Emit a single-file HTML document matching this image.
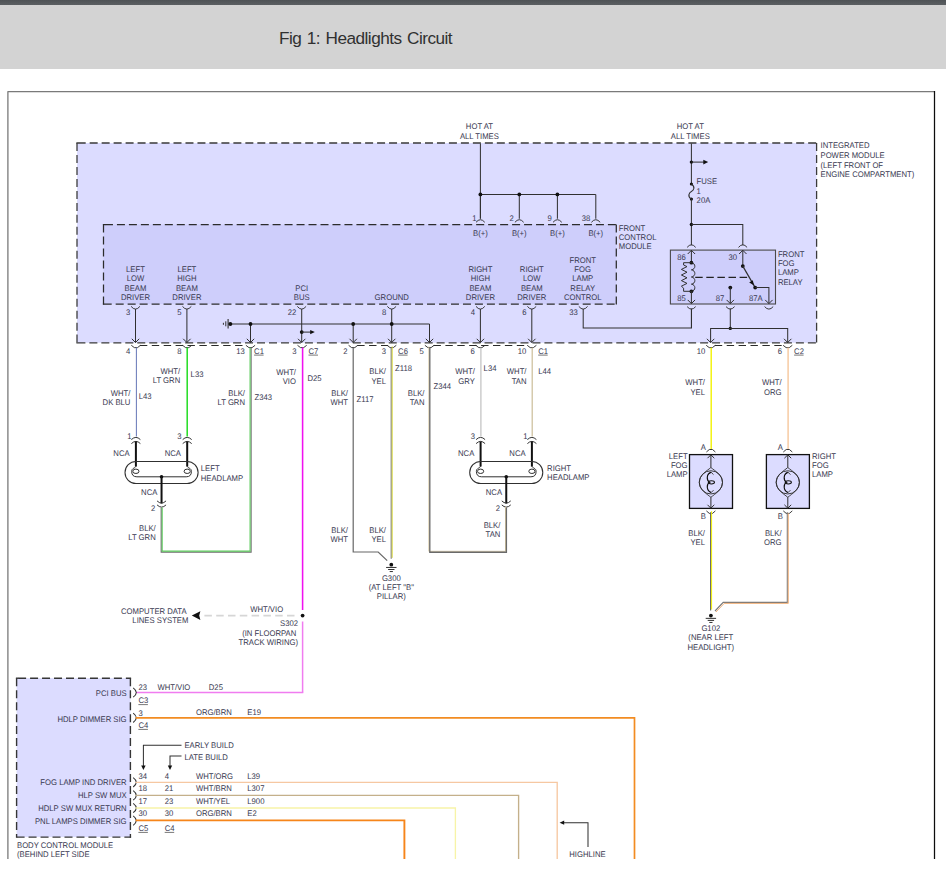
<!DOCTYPE html>
<html lang="en">
<head>
<meta charset="utf-8">
<title>Fig 1: Headlights Circuit</title>
<style>
html,body{margin:0;padding:0;background:#fff;}
body{width:946px;height:871px;overflow:hidden;position:relative;font-family:"Liberation Sans",Arial,sans-serif;}
#topbar{position:absolute;left:0;top:0;width:946px;height:5px;background:linear-gradient(#4e5255,#5b5f62);}
#hdr{position:absolute;left:0;top:5px;width:946px;height:63.5px;background:#d3d3d3;}
#hdr h1{position:absolute;left:279px;top:22.5px;margin:0;font-weight:normal;font-size:17.2px;line-height:20px;color:#303030;letter-spacing:-0.52px;word-spacing:1.2px;white-space:nowrap;}
#dia{position:absolute;left:0;top:0;width:946px;height:859px;overflow:hidden;}
svg text{font-family:"Liberation Sans",Arial,sans-serif;text-rendering:geometricPrecision;}
</style>
</head>
<body>
<div id="dia">
<svg width="946" height="871" viewBox="0 0 946 871" stroke-linecap="butt" stroke-linejoin="miter">
<polyline points="7.9,872 7.9,91.6 934.5,91.6" fill="none" stroke="#7a7a7a" stroke-width="1.3" stroke-linejoin="round"/>
<line x1="934.5" y1="91" x2="934.5" y2="872" stroke="#0c0c0c" stroke-width="1.25" />
<rect x="77" y="143" width="739.6" height="199.8" fill="#dcdcff" stroke="none"/>
<line x1="76.36" y1="143" x2="77.9" y2="143" stroke="#3a3a3a" stroke-width="1.28" />
<line x1="77.7" y1="143" x2="817.24" y2="143" stroke="#3a3a3a" stroke-width="1.28" stroke-dasharray="8 3.975"/>
<line x1="76.36" y1="342.8" x2="77.6" y2="342.8" stroke="#3a3a3a" stroke-width="1.28" />
<line x1="77.4" y1="342.8" x2="817.24" y2="342.8" stroke="#3a3a3a" stroke-width="1.28" stroke-dasharray="8 3.975"/>
<line x1="77" y1="142.36" x2="77" y2="343.44" stroke="#3a3a3a" stroke-width="1.28" stroke-dasharray="8 3.975" stroke-dashoffset="-0.64"/>
<line x1="816.6" y1="142.36" x2="816.6" y2="343.44" stroke="#3a3a3a" stroke-width="1.28" stroke-dasharray="8 3.975" stroke-dashoffset="-0.64"/>
<rect x="103.5" y="224.6" width="512.8" height="79.4" fill="#cecefb" stroke="none"/>
<line x1="102.88" y1="224.6" x2="105.15" y2="224.6" stroke="#2c2c2c" stroke-width="1.25" />
<line x1="104.95" y1="224.6" x2="616.92" y2="224.6" stroke="#2c2c2c" stroke-width="1.25" stroke-dasharray="8 3.975"/>
<line x1="102.88" y1="304" x2="103.9" y2="304" stroke="#2c2c2c" stroke-width="1.25" />
<line x1="103.7" y1="304" x2="616.92" y2="304" stroke="#2c2c2c" stroke-width="1.25" stroke-dasharray="8 3.975"/>
<line x1="103.5" y1="223.97" x2="103.5" y2="304.62" stroke="#2c2c2c" stroke-width="1.25" stroke-dasharray="8 3.975" stroke-dashoffset="-0.62"/>
<line x1="616.3" y1="223.97" x2="616.3" y2="304.62" stroke="#2c2c2c" stroke-width="1.25" stroke-dasharray="8 3.975" stroke-dashoffset="-0.62"/>
<text transform="translate(479.4 129.2) scale(0.94 1)" font-size="8.2" fill="#383850" text-anchor="middle">HOT AT</text>
<text transform="translate(479.4 138.7) scale(0.94 1)" font-size="8.2" fill="#383850" text-anchor="middle">ALL TIMES</text>
<line x1="480.4" y1="143.5" x2="480.4" y2="218.5" stroke="#303030" stroke-width="1.02" />
<line x1="480.4" y1="194.4" x2="595.8" y2="194.4" stroke="#303030" stroke-width="1.02" />
<line x1="480.4" y1="194.4" x2="480.4" y2="218.8" stroke="#303030" stroke-width="1.02" />
<path d="M476,222.3 Q480.4,217.1 484.8,222.3" fill="none" stroke="#303030" stroke-width="0.95" />
<text transform="translate(476.6 221.3) scale(0.94 1)" font-size="8.2" fill="#383850" text-anchor="end">1</text>
<text transform="translate(480.4 236) scale(0.94 1)" font-size="8.2" fill="#383850" text-anchor="middle">B(+)</text>
<line x1="519.3" y1="194.4" x2="519.3" y2="218.8" stroke="#303030" stroke-width="1.02" />
<path d="M514.9,222.3 Q519.3,217.1 523.7,222.3" fill="none" stroke="#303030" stroke-width="0.95" />
<text transform="translate(513.8 221.3) scale(0.94 1)" font-size="8.2" fill="#383850" text-anchor="end">2</text>
<text transform="translate(519.3 236) scale(0.94 1)" font-size="8.2" fill="#383850" text-anchor="middle">B(+)</text>
<line x1="557.4" y1="194.4" x2="557.4" y2="218.8" stroke="#303030" stroke-width="1.02" />
<path d="M553,222.3 Q557.4,217.1 561.8,222.3" fill="none" stroke="#303030" stroke-width="0.95" />
<text transform="translate(551.9 221.3) scale(0.94 1)" font-size="8.2" fill="#383850" text-anchor="end">9</text>
<text transform="translate(557.4 236) scale(0.94 1)" font-size="8.2" fill="#383850" text-anchor="middle">B(+)</text>
<line x1="595.8" y1="194.4" x2="595.8" y2="218.8" stroke="#303030" stroke-width="1.02" />
<path d="M591.4,222.3 Q595.8,217.1 600.2,222.3" fill="none" stroke="#303030" stroke-width="0.95" />
<text transform="translate(590.3 221.3) scale(0.94 1)" font-size="8.2" fill="#383850" text-anchor="end">38</text>
<text transform="translate(595.8 236) scale(0.94 1)" font-size="8.2" fill="#383850" text-anchor="middle">B(+)</text>
<circle cx="480.4" cy="194.4" r="1.9" fill="#111"/>
<circle cx="519.3" cy="194.4" r="1.9" fill="#111"/>
<circle cx="557.4" cy="194.4" r="1.9" fill="#111"/>
<text transform="translate(135.5 271.9) scale(0.94 1)" font-size="8.2" fill="#383850" text-anchor="middle">LEFT</text>
<text transform="translate(135.5 281.25) scale(0.94 1)" font-size="8.2" fill="#383850" text-anchor="middle">LOW</text>
<text transform="translate(135.5 290.6) scale(0.94 1)" font-size="8.2" fill="#383850" text-anchor="middle">BEAM</text>
<text transform="translate(135.5 299.95) scale(0.94 1)" font-size="8.2" fill="#383850" text-anchor="middle">DRIVER</text>
<text transform="translate(186.9 271.9) scale(0.94 1)" font-size="8.2" fill="#383850" text-anchor="middle">LEFT</text>
<text transform="translate(186.9 281.25) scale(0.94 1)" font-size="8.2" fill="#383850" text-anchor="middle">HIGH</text>
<text transform="translate(186.9 290.6) scale(0.94 1)" font-size="8.2" fill="#383850" text-anchor="middle">BEAM</text>
<text transform="translate(186.9 299.95) scale(0.94 1)" font-size="8.2" fill="#383850" text-anchor="middle">DRIVER</text>
<text transform="translate(301.7 290.6) scale(0.94 1)" font-size="8.2" fill="#383850" text-anchor="middle">PCI</text>
<text transform="translate(301.7 299.95) scale(0.94 1)" font-size="8.2" fill="#383850" text-anchor="middle">BUS</text>
<text transform="translate(391.7 300) scale(0.94 1)" font-size="8.2" fill="#383850" text-anchor="middle">GROUND</text>
<text transform="translate(480.4 271.9) scale(0.94 1)" font-size="8.2" fill="#383850" text-anchor="middle">RIGHT</text>
<text transform="translate(480.4 281.25) scale(0.94 1)" font-size="8.2" fill="#383850" text-anchor="middle">HIGH</text>
<text transform="translate(480.4 290.6) scale(0.94 1)" font-size="8.2" fill="#383850" text-anchor="middle">BEAM</text>
<text transform="translate(480.4 299.95) scale(0.94 1)" font-size="8.2" fill="#383850" text-anchor="middle">DRIVER</text>
<text transform="translate(531.8 271.9) scale(0.94 1)" font-size="8.2" fill="#383850" text-anchor="middle">RIGHT</text>
<text transform="translate(531.8 281.25) scale(0.94 1)" font-size="8.2" fill="#383850" text-anchor="middle">LOW</text>
<text transform="translate(531.8 290.6) scale(0.94 1)" font-size="8.2" fill="#383850" text-anchor="middle">BEAM</text>
<text transform="translate(531.8 299.95) scale(0.94 1)" font-size="8.2" fill="#383850" text-anchor="middle">DRIVER</text>
<text transform="translate(582.7 262.6) scale(0.94 1)" font-size="8.2" fill="#383850" text-anchor="middle">FRONT</text>
<text transform="translate(582.7 271.95) scale(0.94 1)" font-size="8.2" fill="#383850" text-anchor="middle">FOG</text>
<text transform="translate(582.7 281.3) scale(0.94 1)" font-size="8.2" fill="#383850" text-anchor="middle">LAMP</text>
<text transform="translate(582.7 290.65) scale(0.94 1)" font-size="8.2" fill="#383850" text-anchor="middle">RELAY</text>
<text transform="translate(582.7 300) scale(0.94 1)" font-size="8.2" fill="#383850" text-anchor="middle">CONTROL</text>
<text transform="translate(618.8 230.5) scale(0.94 1)" font-size="8.2" fill="#383850">FRONT</text>
<text transform="translate(618.8 239.6) scale(0.94 1)" font-size="8.2" fill="#383850">CONTROL</text>
<text transform="translate(618.8 248.7) scale(0.94 1)" font-size="8.2" fill="#383850">MODULE</text>
<text transform="translate(820.5 148.3) scale(0.94 1)" font-size="8.2" fill="#383850">INTEGRATED</text>
<text transform="translate(820.5 157.9) scale(0.94 1)" font-size="8.2" fill="#383850">POWER MODULE</text>
<text transform="translate(820.5 167.5) scale(0.94 1)" font-size="8.2" fill="#383850">(LEFT FRONT OF</text>
<text transform="translate(820.5 177.1) scale(0.94 1)" font-size="8.2" fill="#383850">ENGINE COMPARTMENT)</text>
<path d="M131.1,306.4 Q135.5,311.8 139.9,306.4" fill="none" stroke="#303030" stroke-width="0.95" />
<line x1="135.5" y1="309" x2="135.5" y2="342.5" stroke="#303030" stroke-width="1.02" />
<path d="M131.8,338.8 L135.5,342.5 L139.2,338.8" fill="none" stroke="#303030" stroke-width="1" />
<text transform="translate(130.2 314.6) scale(0.94 1)" font-size="8.2" fill="#383850" text-anchor="end">3</text>
<path d="M182.5,306.4 Q186.9,311.8 191.3,306.4" fill="none" stroke="#303030" stroke-width="0.95" />
<line x1="186.9" y1="309" x2="186.9" y2="342.5" stroke="#303030" stroke-width="1.02" />
<path d="M183.2,338.8 L186.9,342.5 L190.6,338.8" fill="none" stroke="#303030" stroke-width="1" />
<text transform="translate(181.6 314.6) scale(0.94 1)" font-size="8.2" fill="#383850" text-anchor="end">5</text>
<path d="M297.3,306.4 Q301.7,311.8 306.1,306.4" fill="none" stroke="#303030" stroke-width="0.95" />
<line x1="301.7" y1="309" x2="301.7" y2="342.5" stroke="#303030" stroke-width="1.02" />
<path d="M298,338.8 L301.7,342.5 L305.4,338.8" fill="none" stroke="#303030" stroke-width="1" />
<text transform="translate(296.4 314.6) scale(0.94 1)" font-size="8.2" fill="#383850" text-anchor="end">22</text>
<path d="M387.3,306.4 Q391.7,311.8 396.1,306.4" fill="none" stroke="#303030" stroke-width="0.95" />
<line x1="391.7" y1="309" x2="391.7" y2="342.5" stroke="#303030" stroke-width="1.02" />
<path d="M388,338.8 L391.7,342.5 L395.4,338.8" fill="none" stroke="#303030" stroke-width="1" />
<text transform="translate(386.4 314.6) scale(0.94 1)" font-size="8.2" fill="#383850" text-anchor="end">8</text>
<path d="M476,306.4 Q480.4,311.8 484.8,306.4" fill="none" stroke="#303030" stroke-width="0.95" />
<line x1="480.4" y1="309" x2="480.4" y2="342.5" stroke="#303030" stroke-width="1.02" />
<path d="M476.7,338.8 L480.4,342.5 L484.1,338.8" fill="none" stroke="#303030" stroke-width="1" />
<text transform="translate(475.1 314.6) scale(0.94 1)" font-size="8.2" fill="#383850" text-anchor="end">4</text>
<path d="M527.4,306.4 Q531.8,311.8 536.2,306.4" fill="none" stroke="#303030" stroke-width="0.95" />
<line x1="531.8" y1="309" x2="531.8" y2="342.5" stroke="#303030" stroke-width="1.02" />
<path d="M528.1,338.8 L531.8,342.5 L535.5,338.8" fill="none" stroke="#303030" stroke-width="1" />
<text transform="translate(526.5 314.6) scale(0.94 1)" font-size="8.2" fill="#383850" text-anchor="end">6</text>
<path d="M578.8,306.4 Q583.2,311.8 587.6,306.4" fill="none" stroke="#303030" stroke-width="0.95" />
<text transform="translate(577.9 314.6) scale(0.94 1)" font-size="8.2" fill="#383850" text-anchor="end">33</text>
<polyline points="583.2,309 583.2,327.9 691.5,327.9 691.5,309" fill="none" stroke="#303030" stroke-width="1.02" />
<line x1="230.2" y1="324" x2="429.5" y2="324" stroke="#303030" stroke-width="1.02" />
<line x1="228.1" y1="319" x2="228.1" y2="328.6" stroke="#303030" stroke-width="1.1" />
<line x1="225.8" y1="321.3" x2="225.8" y2="326.3" stroke="#303030" stroke-width="1" />
<line x1="223.4" y1="322.8" x2="223.4" y2="324.8" stroke="#303030" stroke-width="1" />
<circle cx="230.3" cy="324" r="2" fill="#111"/>
<line x1="250.5" y1="324" x2="250.5" y2="342.5" stroke="#303030" stroke-width="1.02" />
<path d="M246.8,338.8 L250.5,342.5 L254.2,338.8" fill="none" stroke="#303030" stroke-width="1" />
<line x1="353.2" y1="324" x2="353.2" y2="342.5" stroke="#303030" stroke-width="1.02" />
<path d="M349.5,338.8 L353.2,342.5 L356.9,338.8" fill="none" stroke="#303030" stroke-width="1" />
<line x1="429.5" y1="324" x2="429.5" y2="342.5" stroke="#303030" stroke-width="1.02" />
<path d="M425.8,338.8 L429.5,342.5 L433.2,338.8" fill="none" stroke="#303030" stroke-width="1" />
<circle cx="250.5" cy="324" r="1.9" fill="#111"/>
<circle cx="353.2" cy="324" r="1.9" fill="#111"/>
<circle cx="391.7" cy="324" r="1.9" fill="#111"/>
<circle cx="301.7" cy="332.1" r="1.9" fill="#111"/>
<line x1="301.7" y1="332.1" x2="311" y2="332.1" stroke="#303030" stroke-width="1.02" />
<polygon points="314.8,332.1 310.2,330 310.2,334.2" fill="#111"/>
<path d="M131.3,345.3 L134.3,347.6 L137.5,347.6 L140.5,345.3" fill="none" stroke="#303030" stroke-width="0.95" />
<text transform="translate(130.3 353.5) scale(0.94 1)" font-size="8.2" fill="#383850" text-anchor="end">4</text>
<path d="M182.6,345.3 L185.6,347.6 L188.8,347.6 L191.8,345.3" fill="none" stroke="#303030" stroke-width="0.95" />
<text transform="translate(181.6 353.5) scale(0.94 1)" font-size="8.2" fill="#383850" text-anchor="end">8</text>
<path d="M245.9,345.3 L248.9,347.6 L252.1,347.6 L255.1,345.3" fill="none" stroke="#303030" stroke-width="0.95" />
<text transform="translate(244.9 353.5) scale(0.94 1)" font-size="8.2" fill="#383850" text-anchor="end">13</text>
<text transform="translate(254.1 353.5) scale(0.94 1)" font-size="8.2" fill="#383850">C1</text>
<line x1="254.1" y1="355.1" x2="263.6" y2="355.1" stroke="#555" stroke-width="0.8" />
<path d="M297.5,345.3 L300.5,347.6 L303.7,347.6 L306.7,345.3" fill="none" stroke="#303030" stroke-width="0.95" />
<text transform="translate(296.5 353.5) scale(0.94 1)" font-size="8.2" fill="#383850" text-anchor="end">3</text>
<text transform="translate(308.5 353.5) scale(0.94 1)" font-size="8.2" fill="#383850">C7</text>
<line x1="308.5" y1="355.1" x2="318" y2="355.1" stroke="#555" stroke-width="0.8" />
<path d="M348.6,345.3 L351.6,347.6 L354.8,347.6 L357.8,345.3" fill="none" stroke="#303030" stroke-width="0.95" />
<text transform="translate(347.6 353.5) scale(0.94 1)" font-size="8.2" fill="#383850" text-anchor="end">2</text>
<path d="M387.1,345.3 L390.1,347.6 L393.3,347.6 L396.3,345.3" fill="none" stroke="#303030" stroke-width="0.95" />
<text transform="translate(386.1 353.5) scale(0.94 1)" font-size="8.2" fill="#383850" text-anchor="end">3</text>
<text transform="translate(398.1 353.5) scale(0.94 1)" font-size="8.2" fill="#383850">C6</text>
<line x1="398.1" y1="355.1" x2="407.6" y2="355.1" stroke="#555" stroke-width="0.8" />
<path d="M424.9,345.3 L427.9,347.6 L431.1,347.6 L434.1,345.3" fill="none" stroke="#303030" stroke-width="0.95" />
<text transform="translate(423.9 353.5) scale(0.94 1)" font-size="8.2" fill="#383850" text-anchor="end">5</text>
<path d="M475.8,345.3 L478.8,347.6 L482,347.6 L485,345.3" fill="none" stroke="#303030" stroke-width="0.95" />
<text transform="translate(474.8 353.5) scale(0.94 1)" font-size="8.2" fill="#383850" text-anchor="end">6</text>
<path d="M527.2,345.3 L530.2,347.6 L533.4,347.6 L536.4,345.3" fill="none" stroke="#303030" stroke-width="0.95" />
<text transform="translate(526.2 353.5) scale(0.94 1)" font-size="8.2" fill="#383850" text-anchor="end">10</text>
<text transform="translate(538.2 353.5) scale(0.94 1)" font-size="8.2" fill="#383850">C1</text>
<line x1="538.2" y1="355.1" x2="547.7" y2="355.1" stroke="#555" stroke-width="0.8" />
<path d="M706.2,345.3 L709.2,347.6 L712.4,347.6 L715.4,345.3" fill="none" stroke="#303030" stroke-width="0.95" />
<text transform="translate(705.2 353.5) scale(0.94 1)" font-size="8.2" fill="#383850" text-anchor="end">10</text>
<path d="M783.1,345.3 L786.1,347.6 L789.3,347.6 L792.3,345.3" fill="none" stroke="#303030" stroke-width="0.95" />
<text transform="translate(782.1 353.5) scale(0.94 1)" font-size="8.2" fill="#383850" text-anchor="end">6</text>
<text transform="translate(794.1 353.5) scale(0.94 1)" font-size="8.2" fill="#383850">C2</text>
<line x1="794.1" y1="355.1" x2="803.6" y2="355.1" stroke="#555" stroke-width="0.8" />
<line x1="139.9" y1="345.5" x2="246.9" y2="345.5" stroke="#2a2a2a" stroke-width="1" stroke-dasharray="7.4 4.5"/>
<line x1="357.2" y1="345.5" x2="388.1" y2="345.5" stroke="#2a2a2a" stroke-width="1" stroke-dasharray="7.4 4.5"/>
<line x1="433.5" y1="345.5" x2="528.2" y2="345.5" stroke="#2a2a2a" stroke-width="1" stroke-dasharray="7.4 4.5"/>
<line x1="714.8" y1="345.5" x2="784.1" y2="345.5" stroke="#2a2a2a" stroke-width="1" stroke-dasharray="7.4 4.5"/>
<line x1="136.4" y1="347.4" x2="136.4" y2="436.6" stroke="#6c7cba" stroke-width="1.05" />
<line x1="187.2" y1="347.4" x2="187.2" y2="436.6" stroke="#22dd22" stroke-width="1.5" />
<text transform="translate(130.4 395.7) scale(0.94 1)" font-size="8.2" fill="#383850" text-anchor="end">WHT/</text>
<text transform="translate(130.4 404.9) scale(0.94 1)" font-size="8.2" fill="#383850" text-anchor="end">DK BLU</text>
<text transform="translate(138.8 398.6) scale(0.94 1)" font-size="8.2" fill="#383850">L43</text>
<text transform="translate(180.2 373.7) scale(0.94 1)" font-size="8.2" fill="#383850" text-anchor="end">WHT/</text>
<text transform="translate(180.2 382.9) scale(0.94 1)" font-size="8.2" fill="#383850" text-anchor="end">LT GRN</text>
<text transform="translate(190.6 377.2) scale(0.94 1)" font-size="8.2" fill="#383850">L33</text>
<text transform="translate(245 395.7) scale(0.94 1)" font-size="8.2" fill="#383850" text-anchor="end">BLK/</text>
<text transform="translate(245 404.9) scale(0.94 1)" font-size="8.2" fill="#383850" text-anchor="end">LT GRN</text>
<text transform="translate(254.5 400.3) scale(0.94 1)" font-size="8.2" fill="#383850">Z343</text>
<text transform="translate(296 374.5) scale(0.94 1)" font-size="8.2" fill="#383850" text-anchor="end">WHT/</text>
<text transform="translate(296 384) scale(0.94 1)" font-size="8.2" fill="#383850" text-anchor="end">VIO</text>
<text transform="translate(307.5 381.3) scale(0.94 1)" font-size="8.2" fill="#383850">D25</text>
<path d="M131.4,439.6 Q135.9,435.2 140.4,439.6" fill="none" stroke="#333" stroke-width="1" />
<path d="M131.4,443.6 Q135.9,439.2 140.4,443.6" fill="none" stroke="#333" stroke-width="1" />
<text transform="translate(131.5 438.8) scale(0.94 1)" font-size="8.2" fill="#383850" text-anchor="end">1</text>
<line x1="135.9" y1="441.6" x2="135.9" y2="466.5" stroke="#111" stroke-width="2" />
<text transform="translate(129.6 456.3) scale(0.94 1)" font-size="8.2" fill="#383850" text-anchor="end">NCA</text>
<path d="M182.7,439.6 Q187.2,435.2 191.7,439.6" fill="none" stroke="#333" stroke-width="1" />
<path d="M182.7,443.6 Q187.2,439.2 191.7,443.6" fill="none" stroke="#333" stroke-width="1" />
<text transform="translate(181.6 438.8) scale(0.94 1)" font-size="8.2" fill="#383850" text-anchor="end">3</text>
<line x1="187.2" y1="441.6" x2="187.2" y2="466.5" stroke="#111" stroke-width="2" />
<text transform="translate(180.9 456.3) scale(0.94 1)" font-size="8.2" fill="#383850" text-anchor="end">NCA</text>
<rect x="125" y="461.5" width="73.1" height="22" rx="11" ry="11" fill="none" stroke="#303030" stroke-width="1.05"/>
<path d="M135.9,466 C135.6,468.5 131.7,467.5 131.7,471.5 C131.7,475 133.4,476.8 136.9,476.8 L186.2,476.8 C189.7,476.8 191.4,475 191.4,471.5 C191.4,467.5 187.5,468.5 187.2,466" fill="none" stroke="#303030" stroke-width="1" />
<ellipse cx="135.9" cy="471.3" rx="3.1" ry="2.2" fill="none" stroke="#303030" stroke-width="1"/>
<ellipse cx="187.2" cy="471.3" rx="3.1" ry="2.2" fill="none" stroke="#303030" stroke-width="1"/>
<circle cx="161.55" cy="476.8" r="1.8" fill="#111"/>
<line x1="161.55" y1="476.8" x2="161.55" y2="503.5" stroke="#111" stroke-width="2" />
<text transform="translate(157.35 495.3) scale(0.94 1)" font-size="8.2" fill="#383850" text-anchor="end">NCA</text>
<path d="M157.05,500.9 Q161.55,505.3 166.05,500.9" fill="none" stroke="#333" stroke-width="1" />
<path d="M157.05,504.9 Q161.55,509.3 166.05,504.9" fill="none" stroke="#333" stroke-width="1" />
<text transform="translate(155.25 510.5) scale(0.94 1)" font-size="8.2" fill="#383850" text-anchor="end">2</text>
<text transform="translate(200.8 471.4) scale(0.94 1)" font-size="8.2" fill="#383850">LEFT</text>
<text transform="translate(200.8 480.5) scale(0.94 1)" font-size="8.2" fill="#383850">HEADLAMP</text>
<path d="M476.1,439.6 Q480.6,435.2 485.1,439.6" fill="none" stroke="#333" stroke-width="1" />
<path d="M476.1,443.6 Q480.6,439.2 485.1,443.6" fill="none" stroke="#333" stroke-width="1" />
<text transform="translate(475 438.8) scale(0.94 1)" font-size="8.2" fill="#383850" text-anchor="end">3</text>
<line x1="480.6" y1="441.6" x2="480.6" y2="466.5" stroke="#111" stroke-width="2" />
<text transform="translate(474.3 456.3) scale(0.94 1)" font-size="8.2" fill="#383850" text-anchor="end">NCA</text>
<path d="M527.4,439.6 Q531.9,435.2 536.4,439.6" fill="none" stroke="#333" stroke-width="1" />
<path d="M527.4,443.6 Q531.9,439.2 536.4,443.6" fill="none" stroke="#333" stroke-width="1" />
<text transform="translate(527.5 438.8) scale(0.94 1)" font-size="8.2" fill="#383850" text-anchor="end">1</text>
<line x1="531.9" y1="441.6" x2="531.9" y2="466.5" stroke="#111" stroke-width="2" />
<text transform="translate(525.6 456.3) scale(0.94 1)" font-size="8.2" fill="#383850" text-anchor="end">NCA</text>
<rect x="469.7" y="461.5" width="73.1" height="22" rx="11" ry="11" fill="none" stroke="#303030" stroke-width="1.05"/>
<path d="M480.6,466 C480.3,468.5 476.4,467.5 476.4,471.5 C476.4,475 478.1,476.8 481.6,476.8 L530.9,476.8 C534.4,476.8 536.1,475 536.1,471.5 C536.1,467.5 532.2,468.5 531.9,466" fill="none" stroke="#303030" stroke-width="1" />
<ellipse cx="480.6" cy="471.3" rx="3.1" ry="2.2" fill="none" stroke="#303030" stroke-width="1"/>
<ellipse cx="531.9" cy="471.3" rx="3.1" ry="2.2" fill="none" stroke="#303030" stroke-width="1"/>
<circle cx="506.25" cy="476.8" r="1.8" fill="#111"/>
<line x1="506.25" y1="476.8" x2="506.25" y2="503.5" stroke="#111" stroke-width="2" />
<text transform="translate(502.05 495.3) scale(0.94 1)" font-size="8.2" fill="#383850" text-anchor="end">NCA</text>
<path d="M501.75,500.9 Q506.25,505.3 510.75,500.9" fill="none" stroke="#333" stroke-width="1" />
<path d="M501.75,504.9 Q506.25,509.3 510.75,504.9" fill="none" stroke="#333" stroke-width="1" />
<text transform="translate(499.95 510.5) scale(0.94 1)" font-size="8.2" fill="#383850" text-anchor="end">2</text>
<text transform="translate(547.1 470.7) scale(0.94 1)" font-size="8.2" fill="#383850">RIGHT</text>
<text transform="translate(547.1 479.8) scale(0.94 1)" font-size="8.2" fill="#383850">HEADLAMP</text>
<polyline points="161.2,507.5 161.2,552.1 251.1,552.1 251.1,347.4" fill="none" stroke="#6e6e6e" stroke-width="1.15" />
<polyline points="162.2,507.5 162.2,551.1 250.05,551.1 250.05,347.4" fill="none" stroke="#5ccc5c" stroke-width="1.05" />
<text transform="translate(155.7 530.7) scale(0.94 1)" font-size="8.2" fill="#383850" text-anchor="end">BLK/</text>
<text transform="translate(155.7 540.1) scale(0.94 1)" font-size="8.2" fill="#383850" text-anchor="end">LT GRN</text>
<line x1="302.6" y1="347.4" x2="302.6" y2="610" stroke="#f010f0" stroke-width="1.55" />
<line x1="302.6" y1="621.5" x2="302.6" y2="692.5" stroke="#f07cf0" stroke-width="1.5" />
<line x1="303.3" y1="692.5" x2="136" y2="692.5" stroke="#f07cf0" stroke-width="1.5" />
<circle cx="302.6" cy="615.6" r="1.9" fill="#111"/>
<line x1="204.4" y1="615.7" x2="298.5" y2="615.7" stroke="#d6d6d6" stroke-width="1.8" stroke-dasharray="7.5 4.3"/>
<polygon points="191.8,615.6 200.4,611.2 199.2,615.6 200.4,620" fill="#111"/>
<text transform="translate(186.6 614) scale(0.94 1)" font-size="8.2" fill="#383850" text-anchor="end">COMPUTER DATA</text>
<text transform="translate(188.4 623.2) scale(0.94 1)" font-size="8.2" fill="#383850" text-anchor="end">LINES SYSTEM</text>
<text transform="translate(250.2 612.2) scale(0.94 1)" font-size="8.2" fill="#383850">WHT/VIO</text>
<text transform="translate(298 626.2) scale(0.94 1)" font-size="8.2" fill="#383850" text-anchor="end">S302</text>
<text transform="translate(296.3 636.1) scale(0.94 1)" font-size="8.2" fill="#383850" text-anchor="end">(IN FLOORPAN</text>
<text transform="translate(298 645.2) scale(0.94 1)" font-size="8.2" fill="#383850" text-anchor="end">TRACK WIRING)</text>
<polyline points="353.2,347.4 353.2,552 378.2,552 387.2,560.6" fill="none" stroke="#666" stroke-width="1.2" />
<polyline points="391.2,347.4 391.2,558.8" fill="none" stroke="#777" stroke-width="1.1" />
<polyline points="392.2,346.4 392.2,557.8" fill="none" stroke="#d8d840" stroke-width="1" />
<text transform="translate(348 395.5) scale(0.94 1)" font-size="8.2" fill="#383850" text-anchor="end">BLK/</text>
<text transform="translate(348 405) scale(0.94 1)" font-size="8.2" fill="#383850" text-anchor="end">WHT</text>
<text transform="translate(356.5 402.2) scale(0.94 1)" font-size="8.2" fill="#383850">Z117</text>
<text transform="translate(386 374.2) scale(0.94 1)" font-size="8.2" fill="#383850" text-anchor="end">BLK/</text>
<text transform="translate(386 383.7) scale(0.94 1)" font-size="8.2" fill="#383850" text-anchor="end">YEL</text>
<text transform="translate(395 370.8) scale(0.94 1)" font-size="8.2" fill="#383850">Z118</text>
<text transform="translate(424.5 395.9) scale(0.94 1)" font-size="8.2" fill="#383850" text-anchor="end">BLK/</text>
<text transform="translate(424.5 405.4) scale(0.94 1)" font-size="8.2" fill="#383850" text-anchor="end">TAN</text>
<text transform="translate(433.5 389.3) scale(0.94 1)" font-size="8.2" fill="#383850">Z344</text>
<text transform="translate(348 532.5) scale(0.94 1)" font-size="8.2" fill="#383850" text-anchor="end">BLK/</text>
<text transform="translate(348 542) scale(0.94 1)" font-size="8.2" fill="#383850" text-anchor="end">WHT</text>
<text transform="translate(386 532.5) scale(0.94 1)" font-size="8.2" fill="#383850" text-anchor="end">BLK/</text>
<text transform="translate(386 542) scale(0.94 1)" font-size="8.2" fill="#383850" text-anchor="end">YEL</text>
<circle cx="391.3" cy="564.7" r="1.9" fill="#111"/>
<line x1="386.1" y1="567.45" x2="396.5" y2="567.45" stroke="#303030" stroke-width="1" />
<line x1="388.1" y1="569.5" x2="394.5" y2="569.5" stroke="#303030" stroke-width="1" />
<line x1="389.7" y1="571.55" x2="392.9" y2="571.55" stroke="#303030" stroke-width="1" />
<text transform="translate(391.3 580.8) scale(0.94 1)" font-size="8.2" fill="#383850" text-anchor="middle">G300</text>
<text transform="translate(391.3 590) scale(0.94 1)" font-size="8.2" fill="#383850" text-anchor="middle">(AT LEFT &quot;B&quot;</text>
<text transform="translate(391.3 599.2) scale(0.94 1)" font-size="8.2" fill="#383850" text-anchor="middle"> PILLAR)</text>
<polyline points="505.5,506.6 505.5,551.3 428.9,551.3 428.9,346.5" fill="none" stroke="#d8c9a4" stroke-width="1" />
<polyline points="506.4,507.5 506.4,552.2 429.8,552.2 429.8,347.4" fill="none" stroke="#6a6a6a" stroke-width="1.35" />
<text transform="translate(500.4 527.7) scale(0.94 1)" font-size="8.2" fill="#383850" text-anchor="end">BLK/</text>
<text transform="translate(500.4 537.2) scale(0.94 1)" font-size="8.2" fill="#383850" text-anchor="end">TAN</text>
<line x1="480.9" y1="347.4" x2="480.9" y2="436.6" stroke="#c4c4c4" stroke-width="1.3" />
<line x1="532.2" y1="347.4" x2="532.2" y2="436.6" stroke="#cbbd98" stroke-width="1.2" />
<text transform="translate(474.8 374.2) scale(0.94 1)" font-size="8.2" fill="#383850" text-anchor="end">WHT/</text>
<text transform="translate(474.8 383.7) scale(0.94 1)" font-size="8.2" fill="#383850" text-anchor="end">GRY</text>
<text transform="translate(483.6 371) scale(0.94 1)" font-size="8.2" fill="#383850">L34</text>
<text transform="translate(526.5 374.2) scale(0.94 1)" font-size="8.2" fill="#383850" text-anchor="end">WHT/</text>
<text transform="translate(526.5 383.7) scale(0.94 1)" font-size="8.2" fill="#383850" text-anchor="end">TAN</text>
<text transform="translate(538.3 374.2) scale(0.94 1)" font-size="8.2" fill="#383850">L44</text>
<text transform="translate(690.3 129.2) scale(0.94 1)" font-size="8.2" fill="#383850" text-anchor="middle">HOT AT</text>
<text transform="translate(690.3 138.7) scale(0.94 1)" font-size="8.2" fill="#383850" text-anchor="middle">ALL TIMES</text>
<line x1="691.4" y1="143.5" x2="691.4" y2="184" stroke="#303030" stroke-width="1.02" />
<circle cx="691.4" cy="162.1" r="1.7" fill="#111"/>
<line x1="691.4" y1="162.1" x2="704" y2="162.1" stroke="#303030" stroke-width="1.02" />
<polygon points="708.2,162.1 703.3,159.7 703.3,164.5" fill="#111"/>
<circle cx="691.4" cy="184" r="1.6" fill="#111"/>
<circle cx="691.4" cy="199.1" r="1.6" fill="#111"/>
<path d="M691.4,184 C695.9,187 693.4,190.5 691.4,191.5 C689.4,192.5 686.9,196 691.4,199.1" fill="none" stroke="#303030" stroke-width="1.1" />
<line x1="691.4" y1="199.1" x2="691.4" y2="245.2" stroke="#303030" stroke-width="1.02" />
<text transform="translate(696.6 184) scale(0.94 1)" font-size="8.2" fill="#383850">FUSE</text>
<text transform="translate(696.6 193.5) scale(0.94 1)" font-size="8.2" fill="#383850">1</text>
<text transform="translate(696.6 203) scale(0.94 1)" font-size="8.2" fill="#383850">20A</text>
<circle cx="691.4" cy="224.5" r="1.7" fill="#111"/>
<polyline points="691.4,224.5 742.8,224.5 742.8,245.2" fill="none" stroke="#303030" stroke-width="1.02" />
<path d="M687.1,247.4 Q691.4,242.2 695.7,247.4" fill="none" stroke="#303030" stroke-width="0.95" />
<path d="M738.5,247.4 Q742.8,242.2 747.1,247.4" fill="none" stroke="#303030" stroke-width="0.95" />
<rect x="670.4" y="250.1" width="105.1" height="53.9" fill="#cecefb" stroke="#4a4a4a" stroke-width="1.1"/>
<line x1="691.4" y1="250.3" x2="691.4" y2="262.7" stroke="#303030" stroke-width="1.02" />
<path d="M687.7,254 L691.4,250.3 L695.1,254" fill="none" stroke="#303030" stroke-width="1" />
<circle cx="691.4" cy="262.7" r="1.9" fill="#111"/>
<circle cx="691.4" cy="291.3" r="1.9" fill="#111"/>
<polyline points="691.4,262.7 683.6,262.7 683.6,265 687,266.6 681.4,269.4 687,272.2 681.4,275 687,277.8 681.4,280.6 687,283.4 681.4,286.2 683.6,288.2 683.6,291.3 691.4,291.3" fill="none" stroke="#303030" stroke-width="1" />
<path d="M691.4,262.7 C696,263.3 696,269.3 691.4,269.85 C696,270.45 696,276.45 691.4,277 C696,277.6 696,283.6 691.4,284.15 C696,284.75 696,290.75 691.4,291.3 " fill="none" stroke="#303030" stroke-width="1" />
<line x1="691.4" y1="291.3" x2="691.4" y2="303.6" stroke="#303030" stroke-width="1.02" />
<path d="M687.7,299.9 L691.4,303.6 L695.1,299.9" fill="none" stroke="#303030" stroke-width="1" />
<path d="M687.1,306.6 Q691.4,311.6 695.7,306.6" fill="none" stroke="#303030" stroke-width="0.95" />
<polyline points="691.4,308.6 691.4,327.9" fill="none" stroke="#303030" stroke-width="1.02" />
<line x1="695.2" y1="277.3" x2="749" y2="277.3" stroke="#222" stroke-width="1.25" stroke-dasharray="7.5 3.6"/>
<line x1="742.8" y1="250.3" x2="742.8" y2="266.1" stroke="#303030" stroke-width="1.02" />
<path d="M739.1,254 L742.8,250.3 L746.5,254" fill="none" stroke="#303030" stroke-width="1" />
<circle cx="742.8" cy="266.1" r="1.9" fill="#111"/>
<line x1="742.8" y1="266.1" x2="755.2" y2="287.6" stroke="#303030" stroke-width="1.2" />
<polygon points="753.9,285.3 749.2,282.6 752.8,280.2" fill="#111"/>
<circle cx="755.2" cy="287.6" r="1.9" fill="#111"/>
<polyline points="755.2,287.6 768.9,287.6 768.9,303.6" fill="none" stroke="#303030" stroke-width="1.02" />
<path d="M765.2,299.9 L768.9,303.6 L772.6,299.9" fill="none" stroke="#303030" stroke-width="1" />
<path d="M764.6,306.6 Q768.9,311.6 773.2,306.6" fill="none" stroke="#303030" stroke-width="0.95" />
<circle cx="730.3" cy="287.6" r="1.9" fill="#111"/>
<line x1="730.3" y1="287.6" x2="730.3" y2="303.6" stroke="#303030" stroke-width="1.02" />
<path d="M726.6,299.9 L730.3,303.6 L734,299.9" fill="none" stroke="#303030" stroke-width="1" />
<path d="M726,306.6 Q730.3,311.6 734.6,306.6" fill="none" stroke="#303030" stroke-width="0.95" />
<line x1="730.3" y1="308.6" x2="730.3" y2="328.4" stroke="#303030" stroke-width="1.02" />
<circle cx="730.3" cy="328.4" r="1.7" fill="#111"/>
<polyline points="710.6,342.5 710.6,328.4 787.7,328.4 787.7,342.5" fill="none" stroke="#303030" stroke-width="1.02" />
<path d="M706.9,338.8 L710.6,342.5 L714.3,338.8" fill="none" stroke="#303030" stroke-width="1" />
<path d="M784,338.8 L787.7,342.5 L791.4,338.8" fill="none" stroke="#303030" stroke-width="1" />
<text transform="translate(685.8 260) scale(0.94 1)" font-size="8.2" fill="#383850" text-anchor="end">86</text>
<text transform="translate(737 260) scale(0.94 1)" font-size="8.2" fill="#383850" text-anchor="end">30</text>
<text transform="translate(685.8 300.5) scale(0.94 1)" font-size="8.2" fill="#383850" text-anchor="end">85</text>
<text transform="translate(724.2 300.5) scale(0.94 1)" font-size="8.2" fill="#383850" text-anchor="end">87</text>
<text transform="translate(748.9 300.5) scale(0.94 1)" font-size="8.2" fill="#383850">87A</text>
<text transform="translate(777.9 257) scale(0.94 1)" font-size="8.2" fill="#383850">FRONT</text>
<text transform="translate(777.9 266.2) scale(0.94 1)" font-size="8.2" fill="#383850">FOG</text>
<text transform="translate(777.9 275.4) scale(0.94 1)" font-size="8.2" fill="#383850">LAMP</text>
<text transform="translate(777.9 284.6) scale(0.94 1)" font-size="8.2" fill="#383850">RELAY</text>
<line x1="711.2" y1="347.4" x2="711.2" y2="449.4" stroke="#f2f200" stroke-width="1.4" />
<line x1="788.1" y1="347.4" x2="788.1" y2="449.4" stroke="#f6c79c" stroke-width="1.4" />
<text transform="translate(705 385.3) scale(0.94 1)" font-size="8.2" fill="#383850" text-anchor="end">WHT/</text>
<text transform="translate(705 394.8) scale(0.94 1)" font-size="8.2" fill="#383850" text-anchor="end">YEL</text>
<text transform="translate(781.6 385.3) scale(0.94 1)" font-size="8.2" fill="#383850" text-anchor="end">WHT/</text>
<text transform="translate(781.6 394.8) scale(0.94 1)" font-size="8.2" fill="#383850" text-anchor="end">ORG</text>
<path d="M706.4,452 L709.3,449.5 L712.5,449.5 L715.4,452" fill="none" stroke="#303030" stroke-width="0.95" />
<rect x="689.5" y="454.6" width="43" height="53.8" fill="#dcdcff" stroke="#111" stroke-width="1.3"/>
<line x1="710.9" y1="454.8" x2="710.9" y2="467.6" stroke="#303030" stroke-width="1.02" />
<line x1="710.9" y1="497.2" x2="710.9" y2="508.2" stroke="#303030" stroke-width="1.02" />
<path d="M707.5,458.2 L710.9,454.8 L714.3,458.2" fill="none" stroke="#303030" stroke-width="1" />
<path d="M707.5,504.8 L710.9,508.2 L714.3,504.8" fill="none" stroke="#303030" stroke-width="1" />
<circle cx="710.9" cy="482.35" r="11.6" fill="none" stroke="#303030" stroke-width="0.95"/>
<path d="M710.9,467.5 C715.4,471.2 722.5,475.2 722.5,482.35 C722.5,489.5 715.4,493.6 710.9,497.3 C706.4,493.6 699.3,489.5 699.3,482.35 C699.3,475.2 706.4,471.2 710.9,467.5" fill="none" stroke="#303030" stroke-width="0.9" />
<path d="M708.3,474.6 L710.9,472 L713.5,474.6" fill="none" stroke="#303030" stroke-width="0.9" />
<path d="M708.3,490.2 L710.9,492.8 L713.5,490.2" fill="none" stroke="#303030" stroke-width="0.9" />
<path d="M710.9,472.4 C706.3,474 706.3,480.6 709.7,482.2 C706.3,484 706.3,490.6 710.9,492.4" fill="none" stroke="#111" stroke-width="1.15" />
<ellipse cx="711.4" cy="482.3" rx="3.1" ry="1.6" fill="none" stroke="#111" stroke-width="1.05"/>
<path d="M706.4,510.9 L709.3,513.4 L712.5,513.4 L715.4,510.9" fill="none" stroke="#303030" stroke-width="0.95" />
<text transform="translate(705.9 450.4) scale(0.94 1)" font-size="8.2" fill="#383850" text-anchor="end">A</text>
<text transform="translate(705.9 519.4) scale(0.94 1)" font-size="8.2" fill="#383850" text-anchor="end">B</text>
<text transform="translate(687.6 458.9) scale(0.94 1)" font-size="8.2" fill="#383850" text-anchor="end">LEFT</text>
<text transform="translate(687.6 468.1) scale(0.94 1)" font-size="8.2" fill="#383850" text-anchor="end">FOG</text>
<text transform="translate(687.6 477.3) scale(0.94 1)" font-size="8.2" fill="#383850" text-anchor="end">LAMP</text>
<path d="M783.3,452 L786.2,449.5 L789.4,449.5 L792.3,452" fill="none" stroke="#303030" stroke-width="0.95" />
<rect x="766.4" y="454.6" width="43" height="53.8" fill="#dcdcff" stroke="#111" stroke-width="1.3"/>
<line x1="787.8" y1="454.8" x2="787.8" y2="467.6" stroke="#303030" stroke-width="1.02" />
<line x1="787.8" y1="497.2" x2="787.8" y2="508.2" stroke="#303030" stroke-width="1.02" />
<path d="M784.4,458.2 L787.8,454.8 L791.2,458.2" fill="none" stroke="#303030" stroke-width="1" />
<path d="M784.4,504.8 L787.8,508.2 L791.2,504.8" fill="none" stroke="#303030" stroke-width="1" />
<circle cx="787.8" cy="482.35" r="11.6" fill="none" stroke="#303030" stroke-width="0.95"/>
<path d="M787.8,467.5 C792.3,471.2 799.4,475.2 799.4,482.35 C799.4,489.5 792.3,493.6 787.8,497.3 C783.3,493.6 776.2,489.5 776.2,482.35 C776.2,475.2 783.3,471.2 787.8,467.5" fill="none" stroke="#303030" stroke-width="0.9" />
<path d="M785.2,474.6 L787.8,472 L790.4,474.6" fill="none" stroke="#303030" stroke-width="0.9" />
<path d="M785.2,490.2 L787.8,492.8 L790.4,490.2" fill="none" stroke="#303030" stroke-width="0.9" />
<path d="M787.8,472.4 C783.2,474 783.2,480.6 786.6,482.2 C783.2,484 783.2,490.6 787.8,492.4" fill="none" stroke="#111" stroke-width="1.15" />
<ellipse cx="788.3" cy="482.3" rx="3.1" ry="1.6" fill="none" stroke="#111" stroke-width="1.05"/>
<path d="M783.3,510.9 L786.2,513.4 L789.4,513.4 L792.3,510.9" fill="none" stroke="#303030" stroke-width="0.95" />
<text transform="translate(782.8 450.4) scale(0.94 1)" font-size="8.2" fill="#383850" text-anchor="end">A</text>
<text transform="translate(782.8 519.4) scale(0.94 1)" font-size="8.2" fill="#383850" text-anchor="end">B</text>
<text transform="translate(812 458.9) scale(0.94 1)" font-size="8.2" fill="#383850">RIGHT</text>
<text transform="translate(812 468.1) scale(0.94 1)" font-size="8.2" fill="#383850">FOG</text>
<text transform="translate(812 477.3) scale(0.94 1)" font-size="8.2" fill="#383850">LAMP</text>
<polyline points="710.6,512.2 710.6,610.5" fill="none" stroke="#666" stroke-width="1.1" />
<polyline points="711.6,511.2 711.6,609.5" fill="none" stroke="#f0f000" stroke-width="1" />
<polyline points="787.3,512.2 787.3,602.4 723.2,602.4 715,611" fill="none" stroke="#777" stroke-width="1.1" />
<polyline points="788.3,513.2 788.3,603.4 724.2,603.4 716,612" fill="none" stroke="#f2b27c" stroke-width="1" />
<text transform="translate(705 536) scale(0.94 1)" font-size="8.2" fill="#383850" text-anchor="end">BLK/</text>
<text transform="translate(705 545.4) scale(0.94 1)" font-size="8.2" fill="#383850" text-anchor="end">YEL</text>
<text transform="translate(781.6 536) scale(0.94 1)" font-size="8.2" fill="#383850" text-anchor="end">BLK/</text>
<text transform="translate(781.6 545.4) scale(0.94 1)" font-size="8.2" fill="#383850" text-anchor="end">ORG</text>
<circle cx="710.9" cy="615.6" r="1.9" fill="#111"/>
<line x1="705.7" y1="618.35" x2="716.1" y2="618.35" stroke="#303030" stroke-width="1" />
<line x1="707.7" y1="620.4" x2="714.1" y2="620.4" stroke="#303030" stroke-width="1" />
<line x1="709.3" y1="622.45" x2="712.5" y2="622.45" stroke="#303030" stroke-width="1" />
<text transform="translate(710.8 630.7) scale(0.94 1)" font-size="8.2" fill="#383850" text-anchor="middle">G102</text>
<text transform="translate(710.8 640.2) scale(0.94 1)" font-size="8.2" fill="#383850" text-anchor="middle">(NEAR LEFT</text>
<text transform="translate(710.8 649.7) scale(0.94 1)" font-size="8.2" fill="#383850" text-anchor="middle">HEADLIGHT)</text>
<rect x="16.6" y="678.2" width="113.8" height="158.9" fill="#dcdcff" stroke="none"/>
<line x1="15.9" y1="678.2" x2="18.3" y2="678.2" stroke="#363636" stroke-width="1.4" />
<line x1="18.1" y1="678.2" x2="131.1" y2="678.2" stroke="#363636" stroke-width="1.4" stroke-dasharray="8 3.975"/>
<line x1="16.6" y1="837.1" x2="131.1" y2="837.1" stroke="#363636" stroke-width="1.4" stroke-dasharray="8 3.975"/>
<line x1="16.6" y1="677.5" x2="16.6" y2="837.8" stroke="#363636" stroke-width="1.4" stroke-dasharray="8 3.975" stroke-dashoffset="-0.7"/>
<line x1="130.4" y1="677.5" x2="130.4" y2="837.8" stroke="#363636" stroke-width="1.4" stroke-dasharray="8 3.975" stroke-dashoffset="-0.7"/>
<text transform="translate(126.6 695.8) scale(0.94 1)" font-size="8.2" fill="#383850" text-anchor="end">PCI BUS</text>
<path d="M133.2,687.8 Q139.4,692.5 133.2,697.2" fill="none" stroke="#333" stroke-width="1.05" />
<text transform="translate(126.6 722.1) scale(0.94 1)" font-size="8.2" fill="#383850" text-anchor="end">HDLP DIMMER SIG</text>
<path d="M133.2,713.1 Q139.4,717.8 133.2,722.5" fill="none" stroke="#333" stroke-width="1.05" />
<text transform="translate(126.6 785.1) scale(0.94 1)" font-size="8.2" fill="#383850" text-anchor="end">FOG LAMP IND DRIVER</text>
<path d="M133.2,777.6 Q139.4,782.3 133.2,787" fill="none" stroke="#333" stroke-width="1.05" />
<text transform="translate(126.6 798) scale(0.94 1)" font-size="8.2" fill="#383850" text-anchor="end">HLP SW MUX</text>
<path d="M133.2,790.7 Q139.4,795.4 133.2,800.1" fill="none" stroke="#333" stroke-width="1.05" />
<text transform="translate(126.6 810.8) scale(0.94 1)" font-size="8.2" fill="#383850" text-anchor="end">HDLP SW MUX RETURN</text>
<path d="M133.2,803.3 Q139.4,808 133.2,812.7" fill="none" stroke="#333" stroke-width="1.05" />
<text transform="translate(126.6 824) scale(0.94 1)" font-size="8.2" fill="#383850" text-anchor="end">PNL LAMPS DIMMER SIG</text>
<path d="M133.2,815.9 Q139.4,820.6 133.2,825.3" fill="none" stroke="#333" stroke-width="1.05" />
<polyline points="135.6,717.8 634.5,717.8 634.5,860" fill="none" stroke="#f28c22" stroke-width="1.7" />
<polyline points="135.6,782.4 557.2,782.4 557.2,860" fill="none" stroke="#f6c8a2" stroke-width="1.35" />
<polyline points="135.6,795.4 518.6,795.4 518.6,860" fill="none" stroke="#c4b08a" stroke-width="1.35" />
<polyline points="135.6,808 455.4,808 455.4,860" fill="none" stroke="#f7f4a8" stroke-width="1.35" />
<polyline points="135.6,820.4 404.4,820.4 404.4,860" fill="none" stroke="#f6851a" stroke-width="1.9" />
<text transform="translate(138.4 689.7) scale(0.94 1)" font-size="8.2" fill="#383850">23</text>
<text transform="translate(157.4 689.7) scale(0.94 1)" font-size="8.2" fill="#383850">WHT/VIO</text>
<text transform="translate(208.8 689.7) scale(0.94 1)" font-size="8.2" fill="#383850">D25</text>
<text transform="translate(138.4 703) scale(0.94 1)" font-size="8.2" fill="#383850">C3</text>
<line x1="138.4" y1="704.6" x2="147.9" y2="704.6" stroke="#555" stroke-width="0.8" />
<text transform="translate(138.4 715.6) scale(0.94 1)" font-size="8.2" fill="#383850">3</text>
<text transform="translate(195.9 715.3) scale(0.94 1)" font-size="8.2" fill="#383850">ORG/BRN</text>
<text transform="translate(247.3 715.3) scale(0.94 1)" font-size="8.2" fill="#383850">E19</text>
<text transform="translate(138.4 727.8) scale(0.94 1)" font-size="8.2" fill="#383850">C4</text>
<line x1="138.4" y1="729.4" x2="147.9" y2="729.4" stroke="#555" stroke-width="0.8" />
<text transform="translate(138.4 778.7) scale(0.94 1)" font-size="8.2" fill="#383850">34</text>
<text transform="translate(164.7 778.7) scale(0.94 1)" font-size="8.2" fill="#383850">4</text>
<text transform="translate(195.9 778.7) scale(0.94 1)" font-size="8.2" fill="#383850">WHT/ORG</text>
<text transform="translate(247.3 778.7) scale(0.94 1)" font-size="8.2" fill="#383850">L39</text>
<text transform="translate(138.4 790.8) scale(0.94 1)" font-size="8.2" fill="#383850">18</text>
<text transform="translate(164.7 790.8) scale(0.94 1)" font-size="8.2" fill="#383850">21</text>
<text transform="translate(195.9 790.8) scale(0.94 1)" font-size="8.2" fill="#383850">WHT/BRN</text>
<text transform="translate(247.3 790.8) scale(0.94 1)" font-size="8.2" fill="#383850">L307</text>
<text transform="translate(138.4 803.9) scale(0.94 1)" font-size="8.2" fill="#383850">17</text>
<text transform="translate(164.7 803.9) scale(0.94 1)" font-size="8.2" fill="#383850">23</text>
<text transform="translate(195.9 803.9) scale(0.94 1)" font-size="8.2" fill="#383850">WHT/YEL</text>
<text transform="translate(247.3 803.9) scale(0.94 1)" font-size="8.2" fill="#383850">L900</text>
<text transform="translate(138.4 816.4) scale(0.94 1)" font-size="8.2" fill="#383850">30</text>
<text transform="translate(164.7 816.4) scale(0.94 1)" font-size="8.2" fill="#383850">30</text>
<text transform="translate(195.9 816.4) scale(0.94 1)" font-size="8.2" fill="#383850">ORG/BRN</text>
<text transform="translate(247.3 816.4) scale(0.94 1)" font-size="8.2" fill="#383850">E2</text>
<text transform="translate(138.4 830.8) scale(0.94 1)" font-size="8.2" fill="#383850">C5</text>
<line x1="138.4" y1="832.4" x2="147.9" y2="832.4" stroke="#555" stroke-width="0.8" />
<text transform="translate(164.7 830.8) scale(0.94 1)" font-size="8.2" fill="#383850">C4</text>
<line x1="164.7" y1="832.4" x2="174.2" y2="832.4" stroke="#555" stroke-width="0.8" />
<polyline points="181.5,745.3 143.4,745.3 143.4,766" fill="none" stroke="#303030" stroke-width="1.02" />
<polygon points="143.4,770 141.2,765.4 145.6,765.4" fill="#111"/>
<polyline points="181.5,756 170,756 170,766" fill="none" stroke="#303030" stroke-width="1.02" />
<polygon points="170,770 167.8,765.4 172.2,765.4" fill="#111"/>
<text transform="translate(184.4 748) scale(0.94 1)" font-size="8.2" fill="#383850">EARLY BUILD</text>
<text transform="translate(184.4 759.6) scale(0.94 1)" font-size="8.2" fill="#383850">LATE BUILD</text>
<text transform="translate(17 848.2) scale(0.94 1)" font-size="8.2" fill="#383850">BODY CONTROL MODULE</text>
<text transform="translate(17 857.3) scale(0.94 1)" font-size="8.2" fill="#383850">(BEHIND LEFT SIDE</text>
<polyline points="563,822.7 588,822.7 588,847" fill="none" stroke="#303030" stroke-width="1.02" />
<polygon points="559.6,822.7 564.2,820.6 564.2,824.8" fill="#111"/>
<text transform="translate(569.3 856.6) scale(0.94 1)" font-size="8.2" fill="#383850">HIGHLINE</text>
</svg>
</div>
<div id="topbar"></div>
<div id="hdr"><h1>Fig 1: Headlights Circuit</h1></div>
</body>
</html>
